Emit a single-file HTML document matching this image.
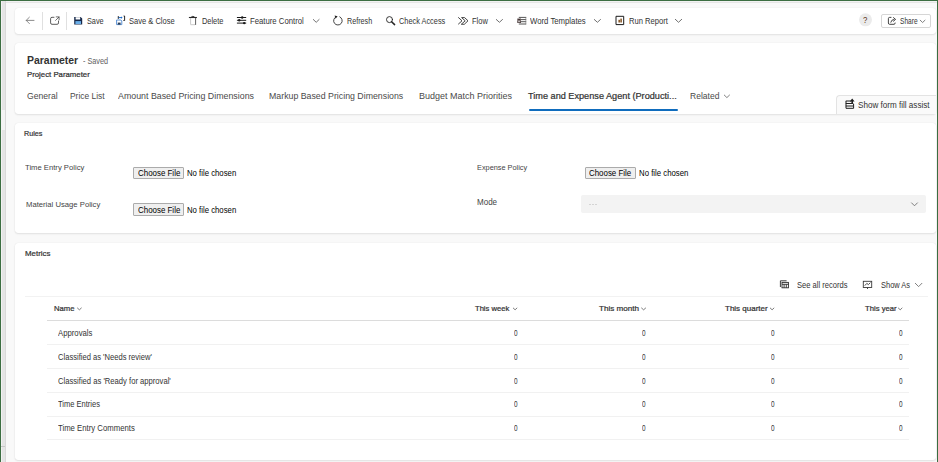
<!DOCTYPE html>
<html><head><meta charset="utf-8"><title>Parameter</title>
<style>
html,body{margin:0;padding:0}
body{width:938px;height:462px;overflow:hidden;position:relative;background:#f9f9f9;font-family:'Liberation Sans',sans-serif}
.a{position:absolute}
.card{position:absolute;left:15px;width:921px;background:#fff;border-radius:3px;box-shadow:0 0 1px rgba(0,0,0,0.12),0 1px 2px rgba(0,0,0,0.09)}
.sep{position:absolute;width:1px;background:#e0e0e0}
.hl{position:absolute;height:1px}
.fb{position:absolute;background:#efefef;border:1px solid #ababab;box-sizing:border-box;border-radius:1px}
svg{position:absolute;overflow:visible}
.t{position:absolute;white-space:pre;line-height:0;transform-origin:0 0;font-family:'Liberation Sans',sans-serif}
</style></head><body>
<!-- frame -->
<div class="a" style="left:0;top:1px;width:938px;height:1px;background:#f2f2f2"></div>
<div class="a" style="left:0;top:2px;width:938px;height:1px;background:#e6e6e6"></div>
<div class="a" style="left:1px;top:0;width:1px;height:462px;background:#f2f2f2"></div>
<div class="a" style="left:2px;top:0;width:3px;height:462px;background:#e5e5e5"></div>
<div class="a" style="left:5px;top:0;width:1px;height:462px;background:#d9d9d9"></div>
<div class="a" style="left:1px;top:110px;width:4px;height:20px;background:#f4f4f4"></div>
<div class="a" style="left:1px;top:446px;width:4px;height:1px;background:#c8c8c8"></div>
<div class="a" style="left:0;top:0;width:938px;height:1px;background:#3c6e42"></div>
<div class="a" style="left:0;top:0;width:1px;height:462px;background:#3c6e42"></div>
<div class="a" style="left:937px;top:0;width:1px;height:462px;background:#3c6e42"></div>

<!-- cards -->
<div class="card" style="top:8px;height:26px"></div>
<div class="card" style="top:43px;height:71px"></div>
<div class="card" style="top:123px;height:110px"></div>
<div class="card" style="top:243px;height:217px"></div>

<!-- toolbar -->
<div class="sep" style="left:42px;top:12px;height:18px"></div>
<div class="sep" style="left:66px;top:12px;height:18px"></div>
<svg style="left:0;top:0" width="938" height="40" viewBox="0 0 938 40">
 <g fill="none" stroke="#424242" stroke-width="0.9" stroke-linecap="round" stroke-linejoin="round">
  <!-- back -->
  <path d="M29.4 17.2 L26.2 20.4 L29.4 23.6 M26.2 20.4 H34" stroke="#6e6e6e" stroke-width="0.8"/>
  <!-- popout -->
  <path d="M54 17.3 H52 Q50.6 17.3 50.6 18.7 V22.9 Q50.6 24.3 52 24.3 H57.1 Q58.5 24.3 58.5 22.9 V21" stroke="#333" stroke-width="0.8"/>
  <path d="M56.2 16.9 H59.1 V19.8 M59 17 L55.6 20.4" stroke="#333" stroke-width="0.7"/>
  <!-- feature control -->
  <path d="M237.3 17.5 H245.8 M237.3 20.3 H245.8 M237.3 23.1 H245.8" stroke="#1a1a1a" stroke-width="1"/>
  <!-- refresh -->
  <path d="M336 16.8 A4.3 4.3 0 1 0 339.8 16.8" stroke="#303030"/>
  <!-- check access -->
  <circle cx="389.5" cy="19.6" r="3" stroke="#242424"/>
  <path d="M391.6 21.8 L394.6 24.6" stroke="#242424" stroke-width="1.5"/>
  <!-- flow -->
  <path d="M458.5 17.6 L462 20.8 L458.5 24 M461.6 24 L465.2 20.8 L461.6 17.6 H464.6 L468 20.8 L464.6 24 Z" stroke="#303030"/>
  <!-- chevrons -->
  <path d="M313.3 19.5 L316.2 22.3 L319.1 19.5" stroke="#616161"/>
  <path d="M496.3 19.5 L499.4 22.3 L502.5 19.5" stroke="#616161"/>
  <path d="M594.3 19.5 L597.4 22.3 L600.5 19.5" stroke="#616161"/>
  <path d="M675.3 19.3 L678.5 22.3 L681.7 19.3" stroke="#616161"/>
  <!-- run report -->
  <rect x="616.4" y="16.3" width="7.3" height="8.3" stroke="#1a1a1a" stroke-width="1"/>
  <!-- word templates -->
  <path d="M519.2 17.4 H525.8 M521 19.6 H525.8 M521 21.7 H525.8 M519.2 24 H525.8" stroke="#2a2a2a" stroke-width="0.8"/><path d="M525.8 17.4 V24" stroke="#777" stroke-width="0.6"/>
  <!-- share -->
  <path d="M891 17.4 H889.6 Q888.4 17.4 888.4 18.6 V23 Q888.4 24.3 889.6 24.3 H894 Q895.2 24.3 895.2 23" stroke="#303030"/>
  <path d="M890.8 22.2 Q891.2 19.6 894 19.4 M893.5 17.6 L895.6 19.4 L893.5 21.2" stroke="#303030"/>
  <path d="M920.2 20.2 L922.6 22.5 L925 20.2" stroke="#616161" stroke-width="0.8"/>
 </g>
 <!-- refresh arrowhead -->
 <path d="M334.6 15.6 L337.6 16.2 L335.6 18.8 Z" fill="#242424"/>
 <!-- save floppy -->
 <path d="M74.2 17 H80.6 L82.2 18.6 V24.6 H74.2 Z" fill="#17294a"/>
 <rect x="75.6" y="17.2" width="4.6" height="2.3" fill="#fff"/>
 <rect x="75.4" y="21.1" width="5.6" height="2.9" fill="#6aaee8"/>
 <!-- save & close -->
 <path d="M116.6 20 H120.8 L121.8 21 V24.6 H116.6 Z" fill="#fff" stroke="#4a86cf" stroke-width="0.9"/>
 <rect x="117.8" y="22.6" width="2.8" height="2" fill="#2a3d55"/>
 <path d="M118.3 16.2 V18.8" stroke="#111" stroke-width="1"/>
 <path d="M118.6 17.6 H122" stroke="#1b6ac9" stroke-width="1"/>
 <path d="M121 16.4 L122.6 17.6 L121 18.8 Z" fill="#1b6ac9"/>
 <path d="M123.6 16 H124.6 V20.5 H123.4" stroke="#111" stroke-width="0.9" fill="none"/>
 <!-- delete -->
 <path d="M188.9 17.5 H196.9" stroke="#2a2a2a" stroke-width="1.1"/>
 <path d="M191.2 17 Q192.9 15.6 194.6 17" stroke="#2a2a2a" stroke-width="0.9" fill="none"/>
 <path d="M195.6 17.8 V24.9" stroke="#333" stroke-width="0.8"/>
 <path d="M190.6 18 V24.5 M190.6 24.7 H195" stroke="#bdbdbd" stroke-width="0.8"/>
 <!-- feature control knobs -->
 <circle cx="242.2" cy="17.5" r="1.2" fill="#1a1a1a"/>
 <circle cx="239.2" cy="20.3" r="1.2" fill="#1a1a1a"/>
 <circle cx="244.2" cy="23.1" r="1.2" fill="#1a1a1a"/>
 <!-- word templates W box -->
 <rect x="517.3" y="18.6" width="3.7" height="4.3" fill="#3a2a2a"/>
 <path d="M517.8 19.5 L518.6 22.2 L519.2 20.6 L519.8 22.2 L520.4 19.5" stroke="#fff" stroke-width="0.5" fill="none"/>
 <!-- run report chart -->
 <rect x="618.4" y="19.8" width="1.6" height="2.7" fill="#8a5a2a"/>
 <rect x="620.3" y="18.6" width="1.6" height="3.9" fill="#8a5a2a"/>
 <!-- help -->
 <circle cx="865.5" cy="19.8" r="6.5" fill="#ebebeb"/>
</svg>
<div class="a" style="left:881px;top:14px;width:50px;height:14px;border:1px solid #d6d6d6;border-radius:2px;box-sizing:border-box"></div>
<span class="t" style="left:862.9px;top:20px;font-size:9.2px;font-weight:400;color:#5a3010;transform:scaleX(0.85)">?</span>

<!-- tabs -->
<div class="a" style="left:528.5px;top:109px;width:149.5px;height:2px;background:#0f6cbd;border-radius:1px"></div>
<svg style="left:0;top:0" width="938" height="120" viewBox="0 0 938 120">
 <path d="M724 94.8 L726.9 97.6 L729.8 94.8" stroke="#616161" stroke-width="0.8" fill="none"/>
</svg>
<div class="a" style="left:836px;top:95px;width:100px;height:19px;background:#fafafa;border-top:1px solid #e3e3e3;border-left:1px solid #e3e3e3;border-top-left-radius:4px;box-sizing:border-box"></div>
<svg style="left:0;top:0" width="938" height="120" viewBox="0 0 938 120">
 <g fill="none" stroke="#1f1f1f" stroke-width="1">
  <path d="M845.8 101 H851 M845.8 103.5 H853.4 M845.8 106 H853.4 M846 101 V108.3 H853.6 V104"/>
 </g>
 <path d="M852.2 98.6 L854.6 101.4 H853 V103 H851.4 V101.4 H849.8 Z" fill="#1f1f1f"/>
</svg>

<!-- rules -->
<div class="fb" style="left:133px;top:167px;width:51px;height:12px"></div>
<div class="fb" style="left:133px;top:203px;width:51px;height:13px"></div>
<div class="fb" style="left:585px;top:167px;width:51px;height:12px"></div>
<div class="a" style="left:581px;top:195px;width:345px;height:18px;background:#f3f3f3;border-radius:2px"></div>
<div class="a" style="left:588.5px;top:204px;width:2px;height:1px;background:#d4d4d4"></div><div class="a" style="left:591.5px;top:204px;width:2px;height:1px;background:#d4d4d4"></div><div class="a" style="left:594.5px;top:204px;width:2px;height:1px;background:#d4d4d4"></div>
<svg style="left:0;top:0" width="938" height="240" viewBox="0 0 938 240">
 <path d="M911.3 202.6 L914.5 205.8 L917.7 202.6" stroke="#707070" stroke-width="0.9" fill="none"/>
</svg>

<!-- metrics -->
<div class="hl" style="left:25px;top:296px;width:903px;background:#f2f2f2"></div>
<div class="hl" style="left:47px;top:320px;width:862px;background:#dcdcdc"></div>
<div class="hl" style="left:47px;top:344px;width:862px;background:#f1f1f1"></div>
<div class="hl" style="left:47px;top:368px;width:862px;background:#f1f1f1"></div>
<div class="hl" style="left:47px;top:392px;width:862px;background:#f1f1f1"></div>
<div class="hl" style="left:47px;top:416px;width:862px;background:#f1f1f1"></div>
<div class="hl" style="left:47px;top:439px;width:862px;background:#f1f1f1"></div>
<svg style="left:0;top:0" width="938" height="462" viewBox="0 0 938 462">
 <g fill="none" stroke="#424242" stroke-width="0.7">
  <path d="M77.2 307.8 L79.4 309.8 L81.6 307.8"/>
  <path d="M513 307.8 L515.1 309.8 L517.2 307.8"/>
  <path d="M641.3 307.8 L643.6 309.8 L645.9 307.8"/>
  <path d="M770 307.8 L772.1 309.8 L774.2 307.8"/>
  <path d="M898.1 307.8 L900.2 309.8 L902.3 307.8"/>
 </g>
 <path d="M915 283 L918.6 286.6 L922.2 283" stroke="#616161" stroke-width="0.8" fill="none"/>
 <!-- see all records -->
 <g fill="none" stroke="#2a2a2a" stroke-width="0.9">
  <path d="M780.4 287 V280.8 H786.6"/>
  <rect x="782" y="282.4" width="6.4" height="5.4"/>
  <path d="M782 284.3 H788.4 M784.1 284.3 V287.8 M786.3 284.3 V287.8"/>
 </g>
 <!-- show as -->
 <g fill="none" stroke="#3a3a3a" stroke-width="0.9">
  <rect x="863.3" y="281.3" width="8.4" height="6.2"/>
  <path d="M864.8 285.6 L866.8 283.4 L868.4 284.6 L870.4 282.6"/>
  <path d="M867.5 287.5 V289"/>
 </g>
</svg>

<span class="t" style="left:86.70px;top:21px;font-size:8.8px;font-weight:400;color:#333333;transform:scaleX(0.8304)">Save</span>
<span class="t" style="left:128.70px;top:21px;font-size:8.8px;font-weight:400;color:#333333;transform:scaleX(0.8576)">Save &amp; Close</span>
<span class="t" style="left:201.50px;top:21px;font-size:8.8px;font-weight:400;color:#333333;transform:scaleX(0.8428)">Delete</span>
<span class="t" style="left:250.10px;top:21px;font-size:8.8px;font-weight:400;color:#333333;transform:scaleX(0.8795)">Feature Control</span>
<span class="t" style="left:346.50px;top:21px;font-size:8.8px;font-weight:400;color:#333333;transform:scaleX(0.8173)">Refresh</span>
<span class="t" style="left:399.10px;top:21px;font-size:8.8px;font-weight:400;color:#333333;transform:scaleX(0.8374)">Check Access</span>
<span class="t" style="left:471.50px;top:21px;font-size:8.8px;font-weight:400;color:#333333;transform:scaleX(0.8500)">Flow</span>
<span class="t" style="left:529.50px;top:21px;font-size:8.8px;font-weight:400;color:#333333;transform:scaleX(0.8815)">Word Templates</span>
<span class="t" style="left:628.70px;top:21px;font-size:8.8px;font-weight:400;color:#333333;transform:scaleX(0.8657)">Run Report</span>
<span class="t" style="left:899.70px;top:21px;font-size:8.8px;font-weight:400;color:#333333;transform:scaleX(0.7483)">Share</span>
<span class="t" style="left:27.10px;top:60px;font-size:10.6px;font-weight:700;color:#333333;transform:scaleX(0.9873)">Parameter</span>
<span class="t" style="left:83.10px;top:61px;font-size:8.8px;font-weight:400;color:#616161;transform:scaleX(0.8272)">- Saved</span>
<span class="t" style="left:27.10px;top:75px;font-size:7.6px;font-weight:400;color:#333333;-webkit-text-stroke:0.22px #333333;transform:scaleX(1.0249)">Project Parameter</span>
<span class="t" style="left:26.70px;top:96px;font-size:8.8px;font-weight:400;color:#4a4a4a;transform:scaleX(0.9779)">General</span>
<span class="t" style="left:69.50px;top:96px;font-size:8.8px;font-weight:400;color:#4a4a4a;transform:scaleX(0.9544)">Price List</span>
<span class="t" style="left:118.30px;top:96px;font-size:8.8px;font-weight:400;color:#4a4a4a;transform:scaleX(1.0038)">Amount Based Pricing Dimensions</span>
<span class="t" style="left:269.30px;top:96px;font-size:8.8px;font-weight:400;color:#4a4a4a;transform:scaleX(0.9984)">Markup Based Pricing Dimensions</span>
<span class="t" style="left:419.30px;top:96px;font-size:8.8px;font-weight:400;color:#4a4a4a;transform:scaleX(1.0234)">Budget Match Priorities</span>
<span class="t" style="left:527.90px;top:96px;font-size:8.8px;font-weight:400;color:#333333;-webkit-text-stroke:0.22px #333333;transform:scaleX(1.0404)">Time and Expense Agent (Producti...</span>
<span class="t" style="left:689.50px;top:96px;font-size:8.8px;font-weight:400;color:#4a4a4a;transform:scaleX(0.9698)">Related</span>
<span class="t" style="left:858.30px;top:105px;font-size:8.8px;font-weight:400;color:#333333;transform:scaleX(0.9209)">Show form fill assist</span>
<span class="t" style="left:24.10px;top:134px;font-size:8.1px;font-weight:400;color:#333333;-webkit-text-stroke:0.22px #333333;transform:scaleX(0.8885)">Rules</span>
<span class="t" style="left:25.30px;top:168px;font-size:8.1px;font-weight:400;color:#444444;transform:scaleX(0.9462)">Time Entry Policy</span>
<span class="t" style="left:25.50px;top:205px;font-size:8.1px;font-weight:400;color:#444444;transform:scaleX(0.9484)">Material Usage Policy</span>
<span class="t" style="left:477.10px;top:168px;font-size:7.6px;font-weight:400;color:#444444;transform:scaleX(0.9659)">Expense Policy</span>
<span class="t" style="left:477.10px;top:202px;font-size:8.8px;font-weight:400;color:#444444;transform:scaleX(0.9130)">Mode</span>
<span class="t" style="left:137.50px;top:173px;font-size:8.8px;font-weight:400;color:#000000;transform:scaleX(0.9013)">Choose File</span>
<span class="t" style="left:186.50px;top:173px;font-size:8.8px;font-weight:400;color:#000000;transform:scaleX(0.8827)">No file chosen</span>
<span class="t" style="left:137.50px;top:210px;font-size:8.8px;font-weight:400;color:#000000;transform:scaleX(0.9013)">Choose File</span>
<span class="t" style="left:186.50px;top:210px;font-size:8.8px;font-weight:400;color:#000000;transform:scaleX(0.8827)">No file chosen</span>
<span class="t" style="left:589.30px;top:173px;font-size:8.8px;font-weight:400;color:#000000;transform:scaleX(0.8989)">Choose File</span>
<span class="t" style="left:638.90px;top:173px;font-size:8.8px;font-weight:400;color:#000000;transform:scaleX(0.8862)">No file chosen</span>
<span class="t" style="left:24.90px;top:254px;font-size:8.1px;font-weight:400;color:#333333;-webkit-text-stroke:0.22px #333333;transform:scaleX(0.9741)">Metrics</span>
<span class="t" style="left:797.30px;top:285px;font-size:8.8px;font-weight:400;color:#333333;transform:scaleX(0.8602)">See all records</span>
<span class="t" style="left:880.70px;top:285px;font-size:8.8px;font-weight:400;color:#333333;transform:scaleX(0.8500)">Show As</span>
<span class="t" style="left:53.50px;top:309px;font-size:7.6px;font-weight:400;color:#333333;-webkit-text-stroke:0.22px #333333;transform:scaleX(1.0107)">Name</span>
<span class="t" style="left:475.10px;top:309px;font-size:7.6px;font-weight:400;color:#333333;-webkit-text-stroke:0.22px #333333;transform:scaleX(0.9997)">This week</span>
<span class="t" style="left:598.50px;top:309px;font-size:7.6px;font-weight:400;color:#333333;-webkit-text-stroke:0.22px #333333;transform:scaleX(1.0654)">This month</span>
<span class="t" style="left:724.90px;top:309px;font-size:7.6px;font-weight:400;color:#333333;-webkit-text-stroke:0.22px #333333;transform:scaleX(1.0543)">This quarter</span>
<span class="t" style="left:864.70px;top:309px;font-size:7.6px;font-weight:400;color:#333333;-webkit-text-stroke:0.22px #333333;transform:scaleX(1.0109)">This year</span>
<span class="t" style="left:58.30px;top:333px;font-size:8.8px;font-weight:400;color:#333333;transform:scaleX(0.8811)">Approvals</span>
<span class="t" style="left:513.50px;top:333px;font-size:8.8px;font-weight:400;color:#333333;transform:scaleX(0.7288)">0</span>
<span class="t" style="left:641.50px;top:333px;font-size:8.8px;font-weight:400;color:#333333;transform:scaleX(0.7288)">0</span>
<span class="t" style="left:770.50px;top:333px;font-size:8.8px;font-weight:400;color:#333333;transform:scaleX(0.7288)">0</span>
<span class="t" style="left:899.30px;top:333px;font-size:8.8px;font-weight:400;color:#333333;transform:scaleX(0.7288)">0</span>
<span class="t" style="left:58.10px;top:357px;font-size:8.8px;font-weight:400;color:#333333;transform:scaleX(0.8619)">Classified as 'Needs review'</span>
<span class="t" style="left:513.50px;top:357px;font-size:8.8px;font-weight:400;color:#333333;transform:scaleX(0.7288)">0</span>
<span class="t" style="left:641.50px;top:357px;font-size:8.8px;font-weight:400;color:#333333;transform:scaleX(0.7288)">0</span>
<span class="t" style="left:770.50px;top:357px;font-size:8.8px;font-weight:400;color:#333333;transform:scaleX(0.7288)">0</span>
<span class="t" style="left:899.30px;top:357px;font-size:8.8px;font-weight:400;color:#333333;transform:scaleX(0.7288)">0</span>
<span class="t" style="left:58.10px;top:381px;font-size:8.8px;font-weight:400;color:#333333;transform:scaleX(0.8678)">Classified as 'Ready for approval'</span>
<span class="t" style="left:513.50px;top:381px;font-size:8.8px;font-weight:400;color:#333333;transform:scaleX(0.7288)">0</span>
<span class="t" style="left:641.50px;top:381px;font-size:8.8px;font-weight:400;color:#333333;transform:scaleX(0.7288)">0</span>
<span class="t" style="left:770.50px;top:381px;font-size:8.8px;font-weight:400;color:#333333;transform:scaleX(0.7288)">0</span>
<span class="t" style="left:899.30px;top:381px;font-size:8.8px;font-weight:400;color:#333333;transform:scaleX(0.7288)">0</span>
<span class="t" style="left:58.10px;top:404px;font-size:8.8px;font-weight:400;color:#333333;transform:scaleX(0.8561)">Time Entries</span>
<span class="t" style="left:513.50px;top:404px;font-size:8.8px;font-weight:400;color:#333333;transform:scaleX(0.7288)">0</span>
<span class="t" style="left:641.50px;top:404px;font-size:8.8px;font-weight:400;color:#333333;transform:scaleX(0.7288)">0</span>
<span class="t" style="left:770.50px;top:404px;font-size:8.8px;font-weight:400;color:#333333;transform:scaleX(0.7288)">0</span>
<span class="t" style="left:899.30px;top:404px;font-size:8.8px;font-weight:400;color:#333333;transform:scaleX(0.7288)">0</span>
<span class="t" style="left:58.10px;top:428px;font-size:8.8px;font-weight:400;color:#333333;transform:scaleX(0.8810)">Time Entry Comments</span>
<span class="t" style="left:513.50px;top:428px;font-size:8.8px;font-weight:400;color:#333333;transform:scaleX(0.7288)">0</span>
<span class="t" style="left:641.50px;top:428px;font-size:8.8px;font-weight:400;color:#333333;transform:scaleX(0.7288)">0</span>
<span class="t" style="left:770.50px;top:428px;font-size:8.8px;font-weight:400;color:#333333;transform:scaleX(0.7288)">0</span>
<span class="t" style="left:899.30px;top:428px;font-size:8.8px;font-weight:400;color:#333333;transform:scaleX(0.7288)">0</span>
</body></html>
